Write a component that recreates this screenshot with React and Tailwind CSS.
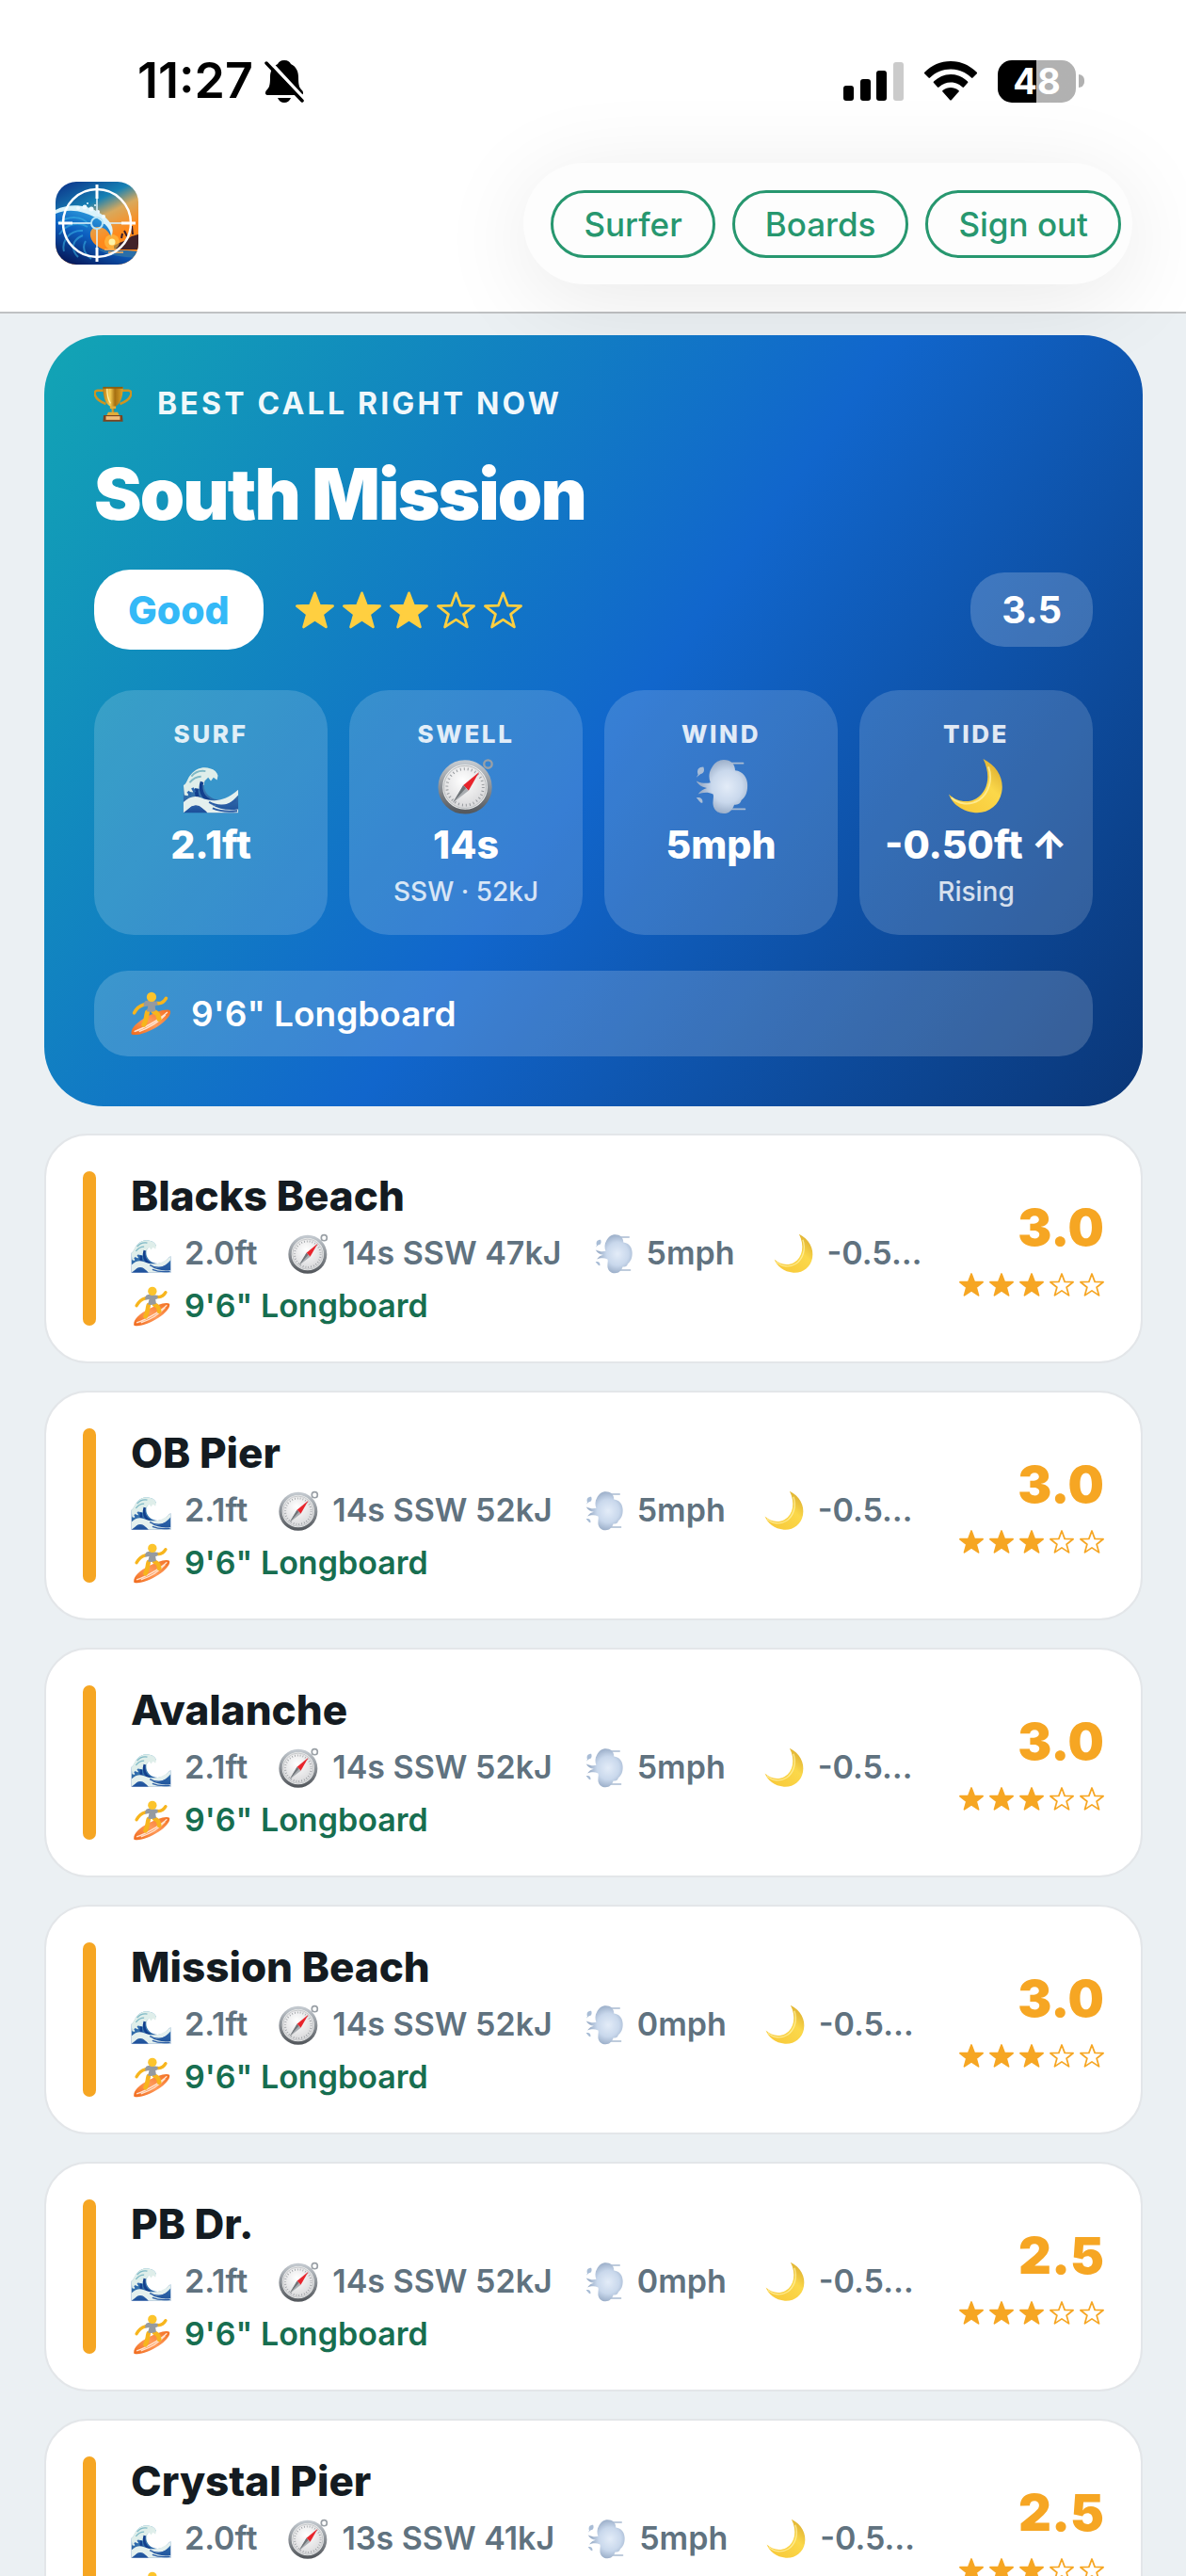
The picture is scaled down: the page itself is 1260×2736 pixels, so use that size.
import React from 'react'

const spots = [
    { name: 'Blacks Beach', surf: '2.0ft', swell: '14s SSW 47kJ', wind: '5mph', tide: '-0.5…', rating: '3.0' },
    { name: 'OB Pier', surf: '2.1ft', swell: '14s SSW 52kJ', wind: '5mph', tide: '-0.5…', rating: '3.0' },
    { name: 'Avalanche', surf: '2.1ft', swell: '14s SSW 52kJ', wind: '5mph', tide: '-0.5…', rating: '3.0' },
    { name: 'Mission Beach', surf: '2.1ft', swell: '14s SSW 52kJ', wind: '0mph', tide: '-0.5…', rating: '3.0' },
    { name: 'PB Dr.', surf: '2.1ft', swell: '14s SSW 52kJ', wind: '0mph', tide: '-0.5…', rating: '2.5' },
    { name: 'Crystal Pier', surf: '2.0ft', swell: '13s SSW 41kJ', wind: '5mph', tide: '-0.5…', rating: '2.5' }
]

const STAR = 'M12 1.6l2.7 7.2 7.7.3-6 4.8 2.1 7.4L12 17l-6.5 4.3 2.1-7.4-6-4.8 7.7-.3z'

// Gradients shared by every icon on the page
function IconDefs() {
    return (
        <svg className="absolute h-0 w-0" aria-hidden="true">
            <defs>
                <linearGradient id="cup" x1="0" x2="1">
                    <stop offset="0" stopColor="#b97a12" />
                    <stop offset=".35" stopColor="#f6cf55" />
                    <stop offset=".6" stopColor="#a56f10" />
                    <stop offset="1" stopColor="#dca42b" />
                </linearGradient>
                <linearGradient id="rim" x1="0" y1="0" x2="0" y2="1">
                    <stop offset="0" stopColor="#c3c9cf" />
                    <stop offset="1" stopColor="#55595e" />
                </linearGradient>
                <radialGradient id="dial" cx=".45" cy=".35" r=".7">
                    <stop offset="0" stopColor="#ffffff" />
                    <stop offset="1" stopColor="#d5d5d7" />
                </radialGradient>
                <radialGradient id="puff" cx=".6" cy=".5" r=".5">
                    <stop offset="0" stopColor="#e3ecf8" />
                    <stop offset=".6" stopColor="#c9d8ec" />
                    <stop offset="1" stopColor="#9db0ca" />
                </radialGradient>
                <linearGradient id="moon" x1=".2" y1="1" x2="1" y2=".1">
                    <stop offset="0" stopColor="#f8c93a" />
                    <stop offset=".6" stopColor="#fbd84a" />
                    <stop offset="1" stopColor="#d9a92d" />
                </linearGradient>
                <linearGradient id="board" x1="0" y1="1" x2="1" y2="0">
                    <stop offset="0" stopColor="#f06a1c" />
                    <stop offset=".5" stopColor="#ff9a5a" />
                    <stop offset="1" stopColor="#f26f21" />
                </linearGradient>
                <linearGradient id="sea" x1="0" y1="0" x2="0" y2="1">
                    <stop offset="0" stopColor="#5aa6c4" />
                    <stop offset="1" stopColor="#1d4f9b" />
                </linearGradient>
                <linearGradient id="sky" x1="0" y1="0" x2=".5" y2="1">
                    <stop offset="0" stopColor="#0b2c86" />
                    <stop offset=".38" stopColor="#1681b4" />
                    <stop offset=".56" stopColor="#d9a95c" />
                    <stop offset=".8" stopColor="#ff8a1c" />
                </linearGradient>
                <linearGradient id="barrel" x1=".2" y1="1" x2=".8" y2="0">
                    <stop offset="0" stopColor="#06195a" />
                    <stop offset=".45" stopColor="#0d5fc0" />
                    <stop offset="1" stopColor="#42c6ee" />
                </linearGradient>
            </defs>
        </svg>
    )
}

function Icon({ className, children }) {
    return (
        <svg className={`shrink-0 ${className}`} viewBox="0 0 64 64" fill="none" aria-hidden="true">
            {children}
        </svg>
    )
}

function Trophy({ className }) {
    return (
        <Icon className={className}>
            <path d="M17 9H6c-5 0-6 5-4 9 3 8 10 11 18 14M47 9h11c5 0 6 5 4 9-3 8-10 11-18 14" stroke="#cf9420" strokeWidth="4" />
            <path d="M15 3h34c0 15-3 27-12 33-3 2-3 6-3 11h-4c0-5 0-9-3-11C18 30 15 18 15 3z" fill="url(#cup)" />
            <path d="M22 5c0 12 2 20 6 26" stroke="#fff0a8" strokeWidth="2" />
            <path d="M15 3h34v3H15z" fill="#8d5d0c" />
            <path d="M27 36h10v4H27zM24 46h16l3 6H21z" fill="#e2ad38" />
            <path d="M16 51h32l1 11H15z" fill="#7a4420" />
            <path d="M20 53h24v6H20z" fill="#f0bd78" />
        </Icon>
    )
}

function Wave({ className }) {
    return (
        <Icon className={className}>
            <path d="M1 62V31c4-2 5-8 9-13 5-6 14-9 21-6 5 1 8 4 9 8-5-2-9-1-12 2-5 5-5 14 1 20 7 7 18 7 25 2 4-3 6-6 9-8v26z" fill="url(#sea)" />
            <path d="M1 31c4-2 4-8 9-13 5-6 14-9 21-6 5 1 8 4 9 8l-1 5-4-3-3 4-3-4-4 4-1 5-4-2-1 6-5-1-2 5-5-1-1 5-4-1z" fill="#dfeeea" />
            <path d="M10 21c4-5 10-7 16-6M8 28c4-5 9-7 13-7" stroke="#7fb9c6" strokeWidth="2" />
            <path d="M22 27c-3 8 0 17 8 21M16 35c-1 6 1 11 5 15" stroke="#123f8d" strokeWidth="4" />
            <path d="M1 50c6-6 13-8 20-5 10 4 24 7 42-9v6C53 54 43 56 33 53c8 5 19 7 30 5v4H28c-5-6-12-9-18-7l-9 7z" fill="#e4f0ee" />
            <path d="M8 58c4-4 9-5 14 0M30 50c8 5 20 6 31-2M34 57c9 4 19 4 28 3" stroke="#2a5ca4" strokeWidth="2" />
            <path d="M6 38l3 4M11 34l3 5" stroke="#2c67ad" strokeWidth="3" />
        </Icon>
    )
}

function Compass({ className }) {
    return (
        <Icon className={className}>
            <circle cx="57" cy="7" r="4.5" stroke="#9aa0a6" strokeWidth="2.5" />
            <circle cx="31" cy="33" r="28" fill="#eceded" stroke="url(#rim)" strokeWidth="5" />
            <circle cx="31" cy="33" r="24" fill="url(#dial)" stroke="#b4b7ba" strokeWidth="1" />
            <circle cx="31" cy="33" r="20.5" stroke="#93979b" strokeWidth="3" strokeDasharray="1 3.3" />
            <path d="M47 16L35 37l-6-6z" fill="#e8242c" />
            <path d="M17 51l12-20 6 6z" fill="#a9adb1" />
            <path d="M17 51l12-20 3 3z" fill="#6f7478" />
        </Icon>
    )
}

function Wind({ className }) {
    return (
        <Icon className={className}>
            <path d="M40 6h17M44 58h15" stroke="#a9bbd1" strokeWidth="2" strokeLinecap="round" />
            <path d="M4 26c7 3 11 3 16 2-2-5-2-11 1-16 3-6 8-10 14-10 8 0 13 5 13 12 9 1 14 8 14 17 0 8-2 13-7 17-1 4-4 5-8 5-2 6-6 10-12 10-8 0-13-6-12-14 0-3 1-5 0-8-6-3-12-2-17 0 3-4 6-6 10-7-5-1-9-3-12-8z" fill="url(#puff)" />
            <path d="M6 19c-2-6 1-9 6-9 2 4 0 8-3 8l-5 4zM4 45c4-1 8 1 7 6-3 0-4-3-7-6z" fill="#a9bdd6" />
        </Icon>
    )
}

function Moon({ className }) {
    return (
        <Icon className={className}>
            <path d="M40 1c16 8 24 23 21 38-3 15-15 24-30 23C16 61 5 52 1 41c8 8 21 11 31 5C46 38 49 19 40 1z" fill="url(#moon)" />
            <path d="M4 45c9 8 21 9 31 3 12-8 16-24 11-38" stroke="#fff0a0" strokeWidth="2" opacity=".8" />
        </Icon>
    )
}

function Surfer({ className }) {
    return (
        <Icon className={className}>
            <path d="M5 62c-2-8 8-18 22-25 13-7 29-13 34-9 2 5-5 14-17 22C30 59 13 65 5 62z" fill="url(#board)" />
            <path d="M9 58c12-4 37-17 48-28M16 58c14-5 30-15 38-24" stroke="#ffe4d0" strokeWidth="2" />
            <path d="M23 19c-7 2-11 6-14 12" stroke="#f7b51d" strokeWidth="5" strokeLinecap="round" />
            <path d="M42 17c5 1 10-2 13-7" stroke="#f7b51d" strokeWidth="5" strokeLinecap="round" />
            <path d="M28 30c-2 7-1 11-5 18M37 29c5 2 7 4 8 11" stroke="#f7b51d" strokeWidth="7" strokeLinecap="round" />
            <path d="M25 14c4-2 11-1 17 1 1 2 1 4 0 5l-3 1 1 7c-4 2-9 2-13 1l2-8-6 1c-1-4 0-6 2-8z" fill="#959aa0" />
            <circle cx="34" cy="8" r="7" fill="#fcc42c" />
        </Icon>
    )
}

function Logo() {
    return (
        <svg className="h-[88px] w-[88px] rounded-[22px]" viewBox="0 0 88 88" fill="none" role="img" aria-label="Home">
            <path d="M0 0h88v88H0z" fill="url(#sky)" />
            <path d="M62 68c6-4 13-5 17-9 3-2 6-2 9-3v16H62z" fill="#41222a" />
            <path d="M76 58l-3-6M82 56l-1-9M70 60l1-5" stroke="#3a1f2c" strokeWidth="2" />
            <path d="M0 30c14-6 32-5 45 4 11 7 18 16 14 25-3-7-7-10-12-11-9-1-12 6-9 13 5 11 25 17 50 20v7H0z" fill="url(#barrel)" />
            <path d="M2 44c12-8 26-8 33 1M4 56c8-12 21-14 30-8M9 74c-3-12 7-23 20-22M24 80c-8-8-7-18 5-23M38 82c-8-6-10-12-6-19" stroke="#3fc0ec" strokeWidth="2" opacity=".5" />
            <path d="M0 30c14-7 32-6 45 2 13 8 19 17 14 27 0-7-4-12-9-16-6-5-13-8-20-10-10-3-20-3-30 1z" fill="#d9f3fb" />
            <g fill="#eefaff">
                <circle cx="24" cy="28" r="2" />
                <circle cx="31" cy="27" r="2.5" />
                <circle cx="38" cy="29" r="2.5" />
                <circle cx="45" cy="32" r="2" />
                <circle cx="51" cy="37" r="2" />
                <circle cx="34" cy="23" r="1" />
                <circle cx="42" cy="25" r="1" />
            </g>
            <circle cx="60" cy="64" r="8" fill="#ffc74a" opacity=".6" />
            <circle cx="60" cy="64" r="3.5" fill="#fff3a8" />
            <path d="M44 71c12 3 28 1 44 3v7c-18-1-34-3-44-10z" fill="#2a6ea8" />
            <path d="M52 72h14M56 75h16" stroke="#ffb25a" strokeWidth="1.5" />
            <circle cx="44" cy="44" r="36" stroke="#ffffff" strokeWidth="2.5" />
            <path d="M44 3v15M44 70v15M3 44h15M70 44h15" stroke="#ffffff" strokeWidth="3" />
            <path d="M44 18v20M44 50v20M18 44h20M50 44h20" stroke="#d9f0fa" strokeWidth="2" opacity=".8" />
            <circle cx="44" cy="44" r="6" stroke="#b9e4f5" strokeWidth="2" />
        </svg>
    )
}

function Stars({ className, starClass, label }) {
    return (
        <div className={`flex items-center ${className}`} role="img" aria-label={label}>
            {[0, 1, 2, 3, 4].map((i) => (
                <svg key={i} className={starClass} viewBox="0.8 0.8 22.4 21.4" strokeLinejoin="round" stroke="currentColor" strokeWidth="1.5" fill={i < 3 ? 'currentColor' : 'none'}>
                    <path d={STAR} />
                </svg>
            ))}
        </div>
    )
}

function StatusBar() {
    return (
        <div className="flex h-[173px] items-start justify-between pt-[58px] pr-[108px] pl-[146px] text-black">
            <div className="flex items-center gap-3">
                <span className="text-[52px] leading-[56px] font-semibold">11:27</span>
                <svg className="h-[46px] w-[42px]" viewBox="0 0 42 46" aria-label="Silent">
                    <path d="M21 1c4 0 6 2 7 4 6 3 8 8 8 14 0 9 1 11 4 14 2 3 1 5-2 5H4c-3 0-4-2-2-5 3-3 4-5 4-14 0-6 2-11 8-14 1-2 3-4 7-4zM14 41h14c-1 3-4 5-7 5s-6-2-7-5z" fill="currentColor" />
                    <path d="M4 1l40 43" stroke="#fff" strokeWidth="4" />
                    <path d="M2 4l38 40" stroke="currentColor" strokeWidth="3.5" strokeLinecap="round" />
                </svg>
            </div>
            <div className="flex h-14 items-center gap-[22px]">
                <svg className="h-[42px] w-16" viewBox="0 0 64 42" fill="currentColor" aria-label="Signal">
                    <rect x="0" y="26" width="11" height="16" rx="3" />
                    <rect x="18" y="19" width="11" height="23" rx="3" />
                    <rect x="35" y="10" width="11" height="32" rx="3" />
                    <rect x="53" y="1" width="11" height="41" rx="3" fill="#cbcbcb" />
                </svg>
                <svg className="h-[42px] w-14" viewBox="0 0 56 42" fill="currentColor" aria-label="Wi-Fi">
                    <path d="M28 0c11 0 20 4 28 12 0 1 0 1-.5 1.500l-4 4c-.5.500-1 .500-1.500 0C44 11.500 36 8.500 28 8.500S12 11.500 6 17.500c-.5.500-1 .500-1.500 0l-4-4C0 13 0 13 0 12 8 4 17 0 28 0z" />
                    <path d="M28 14c7 0 13 3 18 7.500.5.500.5 1 0 1.500l-4 4.500c-.5.500-1 .500-1.500 0-4-3.500-8-5-12.500-5s-8.500 1.500-12.500 5c-.5.500-1 .500-1.500 0L10 23c-.5-.500-.5-1 0-1.500C15 17 21 14 28 14z" />
                    <path d="M28 28c3 0 6 1 8.500 3 .5.500.5 1 0 1.500L29 41c-.6.700-1.400.700-2 0l-7.500-8.500c-.5-.500-.5-1 0-1.500C22 29 25 28 28 28z" />
                </svg>
                <div className="flex items-center gap-[3px]">
                    <div className="flex h-[45px] w-[83px] items-center justify-center rounded-[15px] bg-linear-to-r from-black from-49% to-[#b1b1b1] to-49% text-[38px] leading-[45px] font-bold text-white">
                        48
                    </div>
                    <div className="h-[14px] w-[6px] rounded-r-full bg-[#b1b1b1]" />
                </div>
            </div>
        </div>
    )
}

function NavButton({ children }) {
    return (
        <button type="button" className="h-[72px] rounded-full border-[3px] border-[#27976f] px-8 text-[35px] leading-10 font-medium whitespace-nowrap text-[#27976f]">
            {children}
        </button>
    )
}

function StatCard({ label, icon, value, detail }) {
    return (
        <div className="flex h-[260px] flex-col items-center rounded-[42px] bg-white/16 pt-8 whitespace-nowrap">
            <span className="text-[26px] leading-[30px] font-extrabold tracking-widest text-white/85">{label}</span>
            <div className="mt-[10px]">{icon}</div>
            <span className="mt-2 text-[41px] leading-[48px] font-extrabold text-white">{value}</span>
            {detail && <span className="mt-2 text-[28px] leading-9 font-medium text-white/80">{detail}</span>}
        </div>
    )
}

function BestCall() {
    return (
        <section className="rounded-[63px] bg-[linear-gradient(125deg,#12a5b4_0%,#1166cc_52%,#0a3677_100%)] p-[53px]">
            <div className="flex h-10 items-center gap-[27px]">
                <Trophy className="h-10 w-10" />
                <span className="text-[32px] leading-10 font-bold tracking-widest text-white/95">BEST CALL RIGHT NOW</span>
            </div>
            <h1 className="mt-8 text-[76px] leading-[86px] font-black tracking-tight text-white">South Mission</h1>
            <div className="mt-[38px] flex items-center">
                <span className="flex h-[85px] items-center rounded-[38px] bg-white px-9 text-[41px] leading-[48px] font-extrabold text-[#34b9f7]">Good</span>
                <Stars className="ml-[34px] gap-[9px] text-[#ffcf40]" starClass="h-10 w-[41px]" label="3.5 out of 5" />
                <span className="ml-auto flex h-[79px] items-center rounded-[36px] bg-white/20 px-[33px] text-[40px] leading-[48px] font-bold text-white">3.5</span>
            </div>
            <div className="mt-[43px] grid grid-cols-4 gap-[23px]">
                <StatCard label="SURF" icon={<Wave className="h-[60px] w-[60px]" />} value="2.1ft" />
                <StatCard label="SWELL" icon={<Compass className="h-[60px] w-[60px]" />} value="14s" detail="SSW · 52kJ" />
                <StatCard label="WIND" icon={<Wind className="h-[60px] w-[60px]" />} value="5mph" />
                <StatCard label="TIDE" icon={<Moon className="h-[60px] w-[60px]" />} value="-0.50ft ↑" detail="Rising" />
            </div>
            <div className="mt-[38px] flex h-[91px] items-center gap-5 rounded-[36px] bg-white/18 px-9">
                <Surfer className="h-[47px] w-[47px]" />
                <span className="text-[37px] leading-[44px] font-semibold text-white">9'6" Longboard</span>
            </div>
        </section>
    )
}

function SpotRow({ spot }) {
    return (
        <article className="flex rounded-[46px] border-2 border-[#e3e6e9] bg-white px-[39px] py-[38px]">
            <div className="mr-[37px] w-[14px] shrink-0 rounded-full bg-[#f6a623]" />
            <div className="min-w-0 flex-1">
                <h2 className="text-[44px] leading-[52px] font-extrabold text-[#141b21]">{spot.name}</h2>
                <div className="mt-[14px] flex h-[42px] items-center gap-[33px] text-[34px] leading-[42px] font-semibold whitespace-nowrap text-[#60727f]">
                    <span className="flex items-center gap-[14px]"><Wave className="h-[43px] w-[43px]" />{spot.surf}</span>
                    <span className="flex items-center gap-[14px]"><Compass className="h-[43px] w-[43px]" />{spot.swell}</span>
                    <span className="flex items-center gap-[14px]"><Wind className="h-[43px] w-[43px]" />{spot.wind}</span>
                    <span className="flex items-center gap-[14px] pl-2"><Moon className="h-[43px] w-[43px]" />{spot.tide}</span>
                </div>
                <div className="mt-[14px] flex h-[42px] items-center gap-[14px] text-[34px] leading-[42px] font-semibold text-[#176e50]">
                    <Surfer className="h-[43px] w-[43px]" />
                    9'6" Longboard
                </div>
            </div>
            <div className="ml-9 flex shrink-0 flex-col items-end justify-center text-[#f6a623]">
                <span className="text-[54px] leading-[56px] font-black">{spot.rating}</span>
                <Stars className="mt-5 gap-[6px]" starClass="h-[25px] w-[26px]" label={`${spot.rating} out of 5`} />
            </div>
        </article>
    )
}

export default function App() {
    return (
        <div className="flex h-screen flex-col overflow-hidden bg-[#ebf0f3] font-['Inter','Liberation_Sans',sans-serif]">
            <IconDefs />
            <header className="shrink-0 border-b-2 border-[#bfc1c3] bg-white">
                <StatusBar />
                <div className="flex h-[158px] items-start justify-between pr-[57px] pl-[59px]">
                    <a href="#home" className="mt-5 block">
                        <Logo />
                    </a>
                    <nav className="flex h-[129px] items-center gap-[18px] rounded-full bg-[#fdfdfd] pr-3 pl-[29px] shadow-[0_16px_100px_rgba(0,0,0,0.09)]">
                        <NavButton>Surfer</NavButton>
                        <NavButton>Boards</NavButton>
                        <NavButton>Sign out</NavButton>
                    </nav>
                </div>
            </header>
            <main className="flex min-h-0 flex-1 flex-col gap-[29px] overflow-y-auto pt-[23px] pr-[46px] pl-[47px] [scrollbar-width:none] *:shrink-0">
                <BestCall />
                {spots.map((spot) => (
                    <SpotRow key={spot.name} spot={spot} />
                ))}
            </main>
        </div>
    )
}
